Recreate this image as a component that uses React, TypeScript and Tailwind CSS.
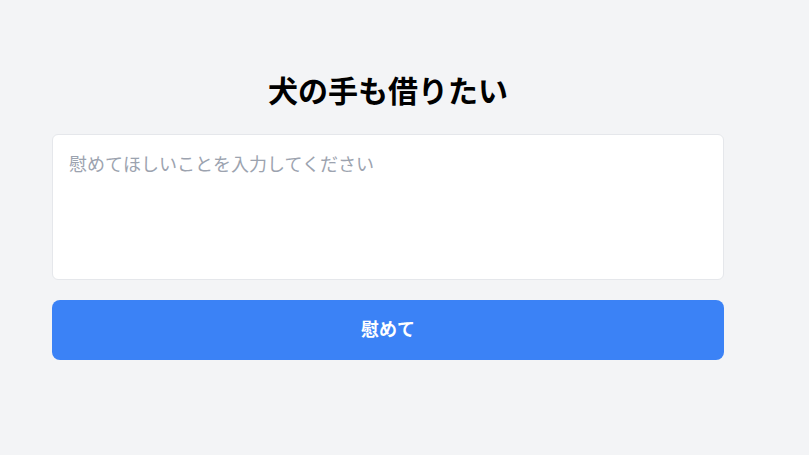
import React, { useState } from 'react';

export default function App() {
  const [text, setText] = useState('');

  return (
    <div
      className="min-h-screen bg-[#f3f4f6] pt-[71px]"
      style={{ fontFamily: '"Noto Sans CJK JP", "Noto Sans", sans-serif' }}
    >
      <div className="ml-[52px] w-[672px] flex flex-col">
        <h1 className="text-center text-3xl leading-9 font-bold text-black mb-[27px]">
          犬の手も借りたい
        </h1>
        <textarea
          value={text}
          onChange={(e) => setText(e.target.value)}
          rows={4}
          placeholder="慰めてほしいことを入力してください"
          className="block w-full resize-none rounded-md border border-[#e5e7eb] bg-white px-4 pt-[14px] pb-[18px] text-lg leading-7 text-[#111827] placeholder:text-[#9ca3af] outline-none"
        />
        <button className="mt-5 w-full rounded-lg bg-[#3b82f6] pt-[14px] pb-[18px] text-lg leading-7 font-bold text-white hover:bg-[#2563eb]">
          慰めて
        </button>
      </div>
    </div>
  );
}
